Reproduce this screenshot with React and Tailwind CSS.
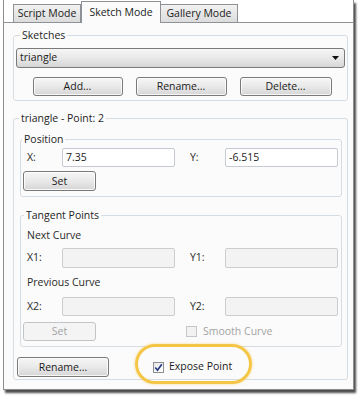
import React from "react";

const font = { fontFamily: '"Open Sans", "Noto Sans", Arial, sans-serif' };

function Btn({ children, className = "", disabled = false }) {
  return (
    <div
      className={
        "flex items-center justify-center rounded-[3px] border text-[10.5px] leading-none " +
        (disabled
          ? "border-[#c2c5c8] bg-[#f4f4f4] text-[#a3a3a3] "
          : "border-[#7a7a7a] bg-gradient-to-b from-[#f6f6f6] via-[#e9e9e9] to-[#d6d6d6] text-[#1b1b1b] shadow-[inset_0_0_0_1px_rgba(255,255,255,0.8)] ") +
        className
      }
    >
      {children}
    </div>
  );
}

function Input({ value, disabled = false, className = "" }) {
  return (
    <div
      className={
        "flex items-center rounded-[2px] border px-[3px] text-[10.5px] leading-none text-[#1b1b1b] " +
        (disabled ? "border-[#cbcdd0] bg-[#f3f3f3] " : "border-[#c5cbd1] bg-white ") +
        className
      }
    >
      {value}
    </div>
  );
}

function Legend({ children, className = "" }) {
  return (
    <legend className={"px-[2px] text-[10.5px] leading-[14px] text-[#1e1e1e] " + className}>
      {children}
    </legend>
  );
}

function CheckBox({ checked = false, disabled = false }) {
  return (
    <div
      className={
        "flex h-[11px] w-[11px] items-center justify-center border " +
        (disabled ? "border-[#c4c6c8] bg-[#f2f2f2]" : "border-[#8c8e92] bg-gradient-to-br from-[#e8e8e8] to-white")
      }
    >
      {checked && (
        <svg width="9" height="9" viewBox="0 0 9 9">
          <path d="M1.3 4.6 L3.5 7.2 L7.8 1.2" fill="none" stroke="#22357a" strokeWidth="1.6" />
        </svg>
      )}
    </div>
  );
}

function Row({ a, b, disabled, valueA = "", valueB = "", h, mt }) {
  return (
    <div className={"flex items-center text-[10.5px] text-[#2a2a2a] " + mt + " " + h}>
      <span className="w-[40px] pl-[5px]">{a}</span>
      <Input disabled={disabled} value={valueA} className={h + " w-[113px]"} />
      <span className="w-[50px] pl-[15px]">{b}</span>
      <Input disabled={disabled} value={valueB} className={h + " w-[113px]"} />
    </div>
  );
}

export default function App() {
  return (
    <div className="h-[400px] w-[364px] bg-white" style={font}>
      <div className="ml-[3px] flex h-[390px] w-[351px] flex-col border-x border-b border-[#8d8d8d] bg-white shadow-[2px_3px_2px_0px_rgba(0,0,0,0.7)]">
        {/* tabs */}
        <div className="flex h-[22px] items-end pl-[9px]">
          <div className="flex h-[18px] w-[68px] items-center justify-center border border-b-0 border-[#8e9196] bg-gradient-to-b from-[#f2f2f2] to-[#dcdcdc] text-[10.5px] text-[#1b1b1b]">
            Script Mode
          </div>
          <div className="relative z-10 -mb-px flex h-[22px] w-[80px] items-center justify-center border border-b-0 border-[#8e9196] bg-[#fbfbfb] text-[10.5px] text-[#1b1b1b]">
            Sketch Mode
          </div>
          <div className="flex h-[18px] w-[77px] items-center justify-center border border-b-0 border-l-0 border-[#8e9196] bg-gradient-to-b from-[#f2f2f2] to-[#dcdcdc] text-[10.5px] text-[#1b1b1b]">
            Gallery Mode
          </div>
        </div>

        {/* panel */}
        <div className="flex flex-1 flex-col border-t border-[#8e9196] bg-[#fbfbfb] pl-[9px] pr-[5px]">
          {/* Sketches */}
          <fieldset className="mt-[5px] rounded-[3px] border border-[#d5dde3] px-[2px] pb-[4px]">
            <Legend className="ml-[4px]">Sketches</Legend>
            <div className="mt-[6px] flex h-[20px] items-center justify-between rounded-[3px] border border-[#7a7a7a] bg-gradient-to-b from-[#f6f6f6] via-[#e9e9e9] to-[#d6d6d6] pl-[3px] pr-[5px] text-[10.5px] text-[#1b1b1b]">
              <span>triangle</span>
              <svg width="7" height="4" viewBox="0 0 7 4">
                <path d="M0 0 H7 L3.5 4 Z" fill="#111" />
              </svg>
            </div>
            <div className="mt-[9px] flex justify-center gap-[13px] pl-[3px]">
              <Btn className="h-[19px] w-[90px]">Add...</Btn>
              <Btn className="h-[19px] w-[91px]">Rename...</Btn>
              <Btn className="h-[19px] w-[92px]">Delete...</Btn>
            </div>
          </fieldset>

          {/* Point */}
          <fieldset className="mt-[10px] rounded-[3px] border border-[#d5dde3] pb-[2px] pl-[6px] pr-[5px]">
            <Legend className="-ml-[1px]">triangle - Point: 2</Legend>

            {/* Position */}
            <fieldset className="mt-[7px] rounded-[3px] border border-[#d5dde3] pb-[5px] pl-[1px] pr-[3px]">
              <Legend className="ml-[0px]">Position</Legend>
              <Row a="X:" b="Y:" valueA="7.35" valueB="-6.515" h="h-[19px]" mt="mt-[2px]" />
              <Btn className="mt-[4px] ml-[1px] h-[20px] w-[73px]">Set</Btn>
            </fieldset>

            {/* Tangent */}
            <fieldset className="mt-[11px] rounded-[3px] border border-[#d5dde3] pb-[5px] pl-[1px] pr-[3px]">
              <Legend className="ml-[2px]">Tangent Points</Legend>
              <div className="mt-[5px] pl-[5px] text-[10.5px] leading-[16px] text-[#2a2a2a]">Next Curve</div>
              <Row a="X1:" b="Y1:" disabled h="h-[20px]" mt="mt-[5px]" />
              <div className="mt-[6px] pl-[5px] text-[10.5px] leading-[16px] text-[#2a2a2a]">Previous Curve</div>
              <Row a="X2:" b="Y2:" disabled h="h-[19px]" mt="mt-[7px]" />
              <div className="mt-[6px] flex items-center">
                <Btn disabled className="ml-[1px] h-[19px] w-[73px]">Set</Btn>
                <div className="ml-[90px] flex items-center gap-[6px] text-[10.5px] text-[#a3a3a3]">
                  <CheckBox disabled />
                  <span>Smooth Curve</span>
                </div>
              </div>
            </fieldset>

            {/* bottom row */}
            <div className="mt-[10px] flex items-center">
              <Btn className="-ml-[3px] h-[20px] w-[92px]">Rename...</Btn>
              <div className="relative ml-[44px] flex items-center gap-[5px] text-[10.5px] text-[#1b1b1b]">
                <CheckBox checked />
                <span>Expose Point</span>
                <div className="pointer-events-none absolute left-[-18px] top-[-15px] h-[40px] w-[117px] rounded-[20px] border-[3px] border-[#f5c646] shadow-[0_0_3px_rgba(245,198,70,0.6)]" />
              </div>
            </div>
          </fieldset>
        </div>
      </div>
    </div>
  );
}
